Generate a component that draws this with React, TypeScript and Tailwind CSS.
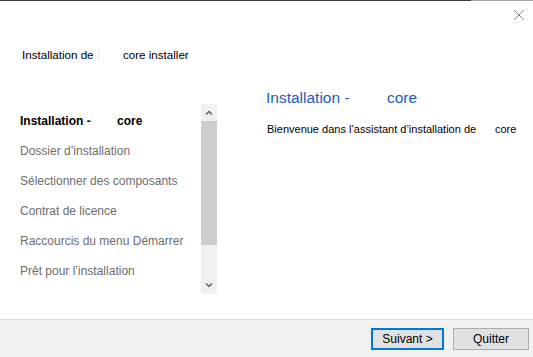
import React from 'react';

const STEPS = [
  'Dossier d’installation',
  'Sélectionner des composants',
  'Contrat de licence',
  'Raccourcis du menu Démarrer',
  'Prêt pour l’installation',
];

const font = { fontFamily: '"Liberation Sans", Arial, sans-serif' };

const Chevron = ({ up }: { up?: boolean }) => (
  <svg width="8" height="5" viewBox="0 0 8 5" className="block">
    <path
      d={up ? 'M1 4.5 L4 1.5 L7 4.5' : 'M1 0.5 L4 3.5 L7 0.5'}
      fill="none"
      stroke="#606060"
      strokeWidth="1.5"
    />
  </svg>
);

const App = () => {
  return (
    <div className="flex h-[357px] w-[533px] flex-col overflow-hidden bg-white" style={font}>
      {/* window top edge */}
      <div className="flex h-px w-full">
        <div className="w-[471px] bg-[#3b3b3b]" />
        <div className="flex-1 bg-[#ababab]" />
      </div>

      <div className="relative flex-1">
        <button type="button" className="absolute right-[8px] top-[8px]">
          <svg width="12" height="12" viewBox="0 0 12 12" className="block">
            <path d="M1 1 L11 11 M11 1 L1 11" stroke="#8a8a8a" strokeWidth="1" />
          </svg>
        </button>

        {/* header */}
        <div className="flex items-center pl-[22px] pt-[46px] text-[11.6px] leading-4 text-black">
          <div className="relative w-[101px]">
            Installation de
            <span className="absolute left-[76px] top-[3px] h-[10px] w-px bg-[#e6e6e6]" />
          </div>
          <span>core installer</span>
        </div>

        {/* body */}
        <div className="mt-[25px] flex">
          <div className="flex w-[217px] pt-[16px]">
            <ul className="flex-1 pl-[20px] pt-[2px] text-[12px]">
              <li className="flex h-[30px] items-center font-bold text-black">
                <span className="w-[97px]">Installation -</span>
                <span>core</span>
              </li>
              {STEPS.map(s => (
                <li key={s} className="flex h-[30px] items-center text-[#6d6d6d]">
                  {s}
                </li>
              ))}
            </ul>
            <div className="flex h-[190px] w-[16px] flex-col bg-[#f0f0f0]">
              <div className="flex h-[17px] items-center justify-center">
                <Chevron up />
              </div>
              <div className="h-[124px] bg-[#cdcdcd]" />
              <div className="flex-1" />
              <div className="flex h-[17px] items-center justify-center">
                <Chevron />
              </div>
            </div>
          </div>

          <div className="flex-1 pl-[49px]">
            <div className="flex text-[15.5px] leading-5 text-[#1d5bb8]">
              <span className="w-[121px]">Installation -</span>
              <span>core</span>
            </div>
            <div className="mt-[13px] flex text-[11px] leading-4 text-black">
              <span className="w-[229px] pl-px">Bienvenue dans l’assistant d’installation de</span>
              <span>core</span>
            </div>
          </div>
        </div>
      </div>

      {/* footer */}
      <div className="flex h-[38px] items-center justify-end gap-[9px] border-t border-[#dfdfdf] bg-[#f0f0f0] pr-[4px] text-[12px]">
        <button
          type="button"
          className="h-[22px] w-[73px] border-2 border-[#0078d7] bg-[#e1e1e1] text-black"
        >
          Suivant &gt;
        </button>
        <button
          type="button"
          className="h-[22px] w-[76px] border border-[#adadad] bg-[#e1e1e1] text-black"
        >
          Quitter
        </button>
      </div>
    </div>
  );
};

export default App;
